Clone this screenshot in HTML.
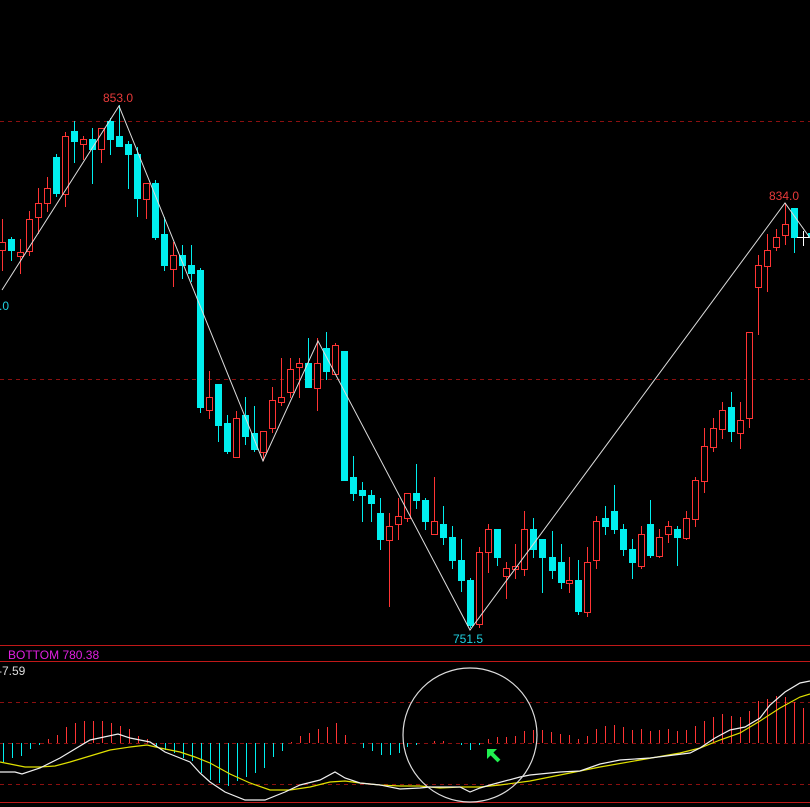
<!DOCTYPE html>
<html><head><meta charset="utf-8"><style>
html,body{margin:0;padding:0;background:#000;width:810px;height:807px;overflow:hidden}
svg{display:block}
.r,.g,.h{shape-rendering:crispEdges}
.r path{stroke:#ff3434;stroke-width:1}
.r rect{stroke:#ff3434;stroke-width:1;fill:#000}
.g path{stroke:#00eeee;stroke-width:1}
.g rect{fill:#00eeee;stroke:none}
text{font-family:"Liberation Sans",sans-serif;font-size:12px}
</style></head><body>
<svg width="810" height="807" viewBox="0 0 810 807" xmlns="http://www.w3.org/2000/svg">
<g class="h" stroke="#8b1010" stroke-dasharray="4,4" stroke-width="1">
<path d="M0 121.5H810M0 379.5H810M0 702.5H810M0 743.5H810M0 784.5H810"/>
</g>
<g class="h" stroke="#c01818" stroke-width="1">
<path d="M0 645.5H810M0 661.5H810M0 802.5H810"/>
</g>
<g class="r">
<path d="M2.5 219V271"/><rect x="-0.5" y="242.5" width="6" height="8"/>
<path d="M20.5 239V274"/><rect x="17.5" y="252.5" width="6" height="4"/>
<path d="M29.5 211V256"/><rect x="26.5" y="219.5" width="6" height="32"/>
<path d="M38.5 188V234"/><rect x="35.5" y="203.5" width="6" height="14"/>
<path d="M47.5 177V212"/><rect x="44.5" y="188.5" width="6" height="15"/>
<path d="M65.5 132V207"/><rect x="62.5" y="136.5" width="6" height="58"/>
<path d="M83.5 136V160"/><rect x="80.5" y="139.5" width="6" height="5"/>
<path d="M101.5 128V163"/><rect x="98.5" y="128.5" width="6" height="21"/>
<path d="M146.5 183V219"/><rect x="143.5" y="183.5" width="6" height="16"/>
<path d="M173.5 242V287"/><rect x="170.5" y="255.5" width="6" height="14"/>
<path d="M209.5 371V419"/><rect x="206.5" y="397.5" width="6" height="13"/>
<path d="M236.5 411V457"/><rect x="233.5" y="418.5" width="6" height="39"/>
<path d="M263.5 431V461"/><rect x="260.5" y="431.5" width="6" height="21"/>
<path d="M272.5 387V433"/><rect x="269.5" y="400.5" width="6" height="28"/>
<path d="M281.5 358V406"/><rect x="278.5" y="397.5" width="6" height="5"/>
<path d="M290.5 358V398"/><rect x="287.5" y="369.5" width="6" height="23"/>
<path d="M299.5 358V398"/><rect x="296.5" y="363.5" width="6" height="4"/>
<path d="M317.5 338V411"/><rect x="314.5" y="363.5" width="6" height="25"/>
<path d="M335.5 343V374"/><rect x="332.5" y="345.5" width="6" height="29"/>
<path d="M389.5 513V607"/><rect x="386.5" y="526.5" width="6" height="14"/>
<path d="M398.5 498V540"/><rect x="395.5" y="516.5" width="6" height="8"/>
<path d="M407.5 493V522"/><rect x="404.5" y="493.5" width="6" height="25"/>
<path d="M434.5 477V534"/><rect x="431.5" y="521.5" width="6" height="13"/>
<path d="M479.5 547V628"/><rect x="476.5" y="552.5" width="6" height="72"/>
<path d="M488.5 524V573"/><rect x="485.5" y="529.5" width="6" height="23"/>
<path d="M506.5 562V599"/><rect x="503.5" y="568.5" width="6" height="8"/>
<path d="M515.5 544V579"/><rect x="512.5" y="566.5" width="6" height="3"/>
<path d="M524.5 511V576"/><rect x="521.5" y="529.5" width="6" height="40"/>
<path d="M569.5 557V593"/><rect x="566.5" y="580.5" width="6" height="3"/>
<path d="M587.5 547V617"/><rect x="584.5" y="562.5" width="6" height="50"/>
<path d="M596.5 516V569"/><rect x="593.5" y="521.5" width="6" height="39"/>
<path d="M641.5 526V569"/><rect x="638.5" y="534.5" width="6" height="32"/>
<path d="M659.5 529V558"/><rect x="656.5" y="537.5" width="6" height="19"/>
<path d="M668.5 521V543"/><rect x="665.5" y="526.5" width="6" height="8"/>
<path d="M686.5 511V540"/><rect x="683.5" y="518.5" width="6" height="20"/>
<path d="M695.5 477V527"/><rect x="692.5" y="480.5" width="6" height="39"/>
<path d="M704.5 428V493"/><rect x="701.5" y="446.5" width="6" height="35"/>
<path d="M713.5 418V452"/><rect x="710.5" y="428.5" width="6" height="19"/>
<path d="M722.5 402V439"/><rect x="719.5" y="410.5" width="6" height="19"/>
<path d="M740.5 402V449"/><rect x="737.5" y="420.5" width="6" height="13"/>
<path d="M749.5 332V428"/><rect x="746.5" y="332.5" width="6" height="86"/>
<path d="M758.5 255V335"/><rect x="755.5" y="265.5" width="6" height="22"/>
<path d="M767.5 234V292"/><rect x="764.5" y="250.5" width="6" height="16"/>
<path d="M776.5 229V251"/><rect x="773.5" y="237.5" width="6" height="10"/>
<path d="M785.5 203V245"/><rect x="782.5" y="224.5" width="6" height="11"/>
</g>
<g class="g">
<path d="M11.5 237V261"/><rect x="8" y="239" width="7" height="12"/>
<path d="M56.5 154V197"/><rect x="53" y="157" width="7" height="37"/>
<path d="M74.5 121V163"/><rect x="71" y="131" width="7" height="11"/>
<path d="M92.5 128V184"/><rect x="89" y="139" width="7" height="11"/>
<path d="M110.5 118V155"/><rect x="107" y="121" width="7" height="19"/>
<path d="M119.5 105V147"/><rect x="116" y="136" width="7" height="11"/>
<path d="M128.5 141V189"/><rect x="125" y="144" width="7" height="11"/>
<path d="M137.5 147V217"/><rect x="134" y="154" width="7" height="45"/>
<path d="M155.5 180V240"/><rect x="152" y="183" width="7" height="55"/>
<path d="M164.5 217V271"/><rect x="161" y="234" width="7" height="32"/>
<path d="M182.5 245V279"/><rect x="179" y="255" width="7" height="11"/>
<path d="M191.5 245V282"/><rect x="188" y="265" width="7" height="9"/>
<path d="M200.5 268V413"/><rect x="197" y="270" width="7" height="138"/>
<path d="M218.5 384V442"/><rect x="215" y="384" width="7" height="42"/>
<path d="M227.5 415V454"/><rect x="224" y="423" width="7" height="29"/>
<path d="M245.5 397V445"/><rect x="242" y="415" width="7" height="22"/>
<path d="M254.5 406V452"/><rect x="251" y="433" width="7" height="17"/>
<path d="M308.5 338V388"/><rect x="305" y="363" width="7" height="25"/>
<path d="M326.5 332V380"/><rect x="323" y="348" width="7" height="24"/>
<path d="M344.5 351V481"/><rect x="341" y="351" width="7" height="130"/>
<path d="M353.5 456V501"/><rect x="350" y="477" width="7" height="17"/>
<path d="M362.5 482V522"/><rect x="359" y="490" width="7" height="6"/>
<path d="M371.5 490V522"/><rect x="368" y="495" width="7" height="9"/>
<path d="M380.5 498V550"/><rect x="377" y="513" width="7" height="27"/>
<path d="M416.5 464V509"/><rect x="413" y="493" width="7" height="8"/>
<path d="M425.5 498V530"/><rect x="422" y="500" width="7" height="22"/>
<path d="M443.5 506V545"/><rect x="440" y="524" width="7" height="14"/>
<path d="M452.5 526V569"/><rect x="449" y="537" width="7" height="24"/>
<path d="M461.5 539V592"/><rect x="458" y="560" width="7" height="21"/>
<path d="M470.5 578V628"/><rect x="467" y="580" width="7" height="46"/>
<path d="M497.5 529V566"/><rect x="494" y="529" width="7" height="29"/>
<path d="M533.5 518V558"/><rect x="530" y="529" width="7" height="21"/>
<path d="M542.5 539V593"/><rect x="539" y="539" width="7" height="19"/>
<path d="M552.5 531V579"/><rect x="549" y="557" width="7" height="14"/>
<path d="M561.5 544V589"/><rect x="558" y="562" width="7" height="21"/>
<path d="M578.5 560V615"/><rect x="575" y="580" width="7" height="32"/>
<path d="M605.5 506V535"/><rect x="602" y="518" width="7" height="9"/>
<path d="M614.5 485V534"/><rect x="611" y="511" width="7" height="19"/>
<path d="M623.5 524V556"/><rect x="620" y="529" width="7" height="21"/>
<path d="M632.5 539V579"/><rect x="629" y="549" width="7" height="14"/>
<path d="M650.5 500V558"/><rect x="647" y="524" width="7" height="32"/>
<path d="M677.5 526V566"/><rect x="674" y="529" width="7" height="9"/>
<path d="M731.5 392V442"/><rect x="728" y="407" width="7" height="25"/>
<path d="M794.5 208V253"/><rect x="791" y="208" width="7" height="30"/>
<rect x="808" y="233" width="3" height="5"/>
</g>
<path d="M797 237.5H809M803.5 231V246" stroke="#fff" stroke-width="1" shape-rendering="crispEdges"/>
<polyline points="2,290 119,106 263,461 318,341 470,630 785,203 810,238" fill="none" stroke="#ddd" stroke-width="1"/>
<text x="103" y="102" fill="#e83a3a">853.0</text>
<text x="769" y="200" fill="#e83a3a">834.0</text>
<text x="453" y="643" fill="#20d0e0">751.5</text>
<text x="9" y="310" fill="#20d0e0" text-anchor="end">0.0</text>
<text x="8" y="659" fill="#e020e0">BOTTOM 780.38</text>
<text x="-2" y="675" fill="#ddd">-7.59</text>
<g class="h" stroke="#ff3434" stroke-width="1">
<path d="M48.5 743V739M57.5 743V735M66.5 743V727M75.5 743V723M84.5 743V721M93.5 743V721M102.5 743V721M111.5 743V723M120.5 743V726M129.5 743V729M138.5 743V736M147.5 743V739M291.5 743V742M300.5 743V736M309.5 743V733M318.5 743V729M327.5 743V727M336.5 743V723M345.5 743V735M434.5 743V741M443.5 743V741M488.5 743V739M497.5 743V737M506.5 743V737M515.5 743V736M524.5 743V731M533.5 743V730M542.5 743V730M551.5 743V732M560.5 743V734M569.5 743V735M578.5 743V739M587.5 743V736M596.5 743V729M605.5 743V726M614.5 743V725M623.5 743V727M632.5 743V730M641.5 743V729M650.5 743V731M659.5 743V730M668.5 743V729M677.5 743V731M686.5 743V730M695.5 743V726M704.5 743V721M713.5 743V717M722.5 743V714M731.5 743V716M740.5 743V717M749.5 743V711M758.5 743V701M767.5 743V699M776.5 743V696M785.5 743V697M794.5 743V702M803.5 743V708"/>
</g>
<g class="h" stroke="#00eeee" stroke-width="1">
<path d="M3.5 743V762M12.5 743V758M21.5 743V756M30.5 743V749M39.5 743V745M156.5 743V747M165.5 743V750M174.5 743V753M183.5 743V758M192.5 743V761M201.5 743V773M210.5 743V780M219.5 743V783M228.5 743V786M237.5 743V781M246.5 743V777M255.5 743V773M264.5 743V768M273.5 743V757M282.5 743V751M363.5 743V748M372.5 743V751M381.5 743V755M390.5 743V755M399.5 743V753M407.5 743V747M416.5 743V745M461.5 743V745M470.5 743V750M479.5 743V745"/>
</g>
<polyline fill="none" stroke="#e0e000" stroke-width="1.2" points="0,762 10,764 25,767 40,767 55,766 70,762 90,756 110,750 130,747 147,745 160,748 180,752 195,757 210,763 230,774 250,783 270,790 290,790 310,787 330,782 345,781 360,783 380,785 400,786 420,786 440,788 460,787 480,787 500,785 530,781 560,775 600,767 640,760 680,753 700,748 720,740 740,733 760,721 780,708 800,697 810,694"/>
<polyline fill="none" stroke="#f0f0f0" stroke-width="1.2" points="0,772 15,772 22,774 40,768 60,758 90,740 118,734 130,738 150,742 165,752 190,762 200,773 210,782 225,792 245,800 265,800 285,792 300,785 320,780 335,772 345,778 360,783 380,785 400,789 420,788 430,787 460,787 470,792 480,788 490,785 520,777 530,775 560,772 580,771 600,764 620,760 650,758 690,753 700,748 715,738 730,730 745,727 760,718 770,705 785,692 800,683 810,681"/>
<circle cx="470" cy="735" r="67" fill="none" stroke="#ddd" stroke-width="1.2"/>
<polygon points="487,749 497,749 487,759" fill="#20f050"/>
<path d="M490 752L499 761" stroke="#20f050" stroke-width="4"/>
</svg>
</body></html>
